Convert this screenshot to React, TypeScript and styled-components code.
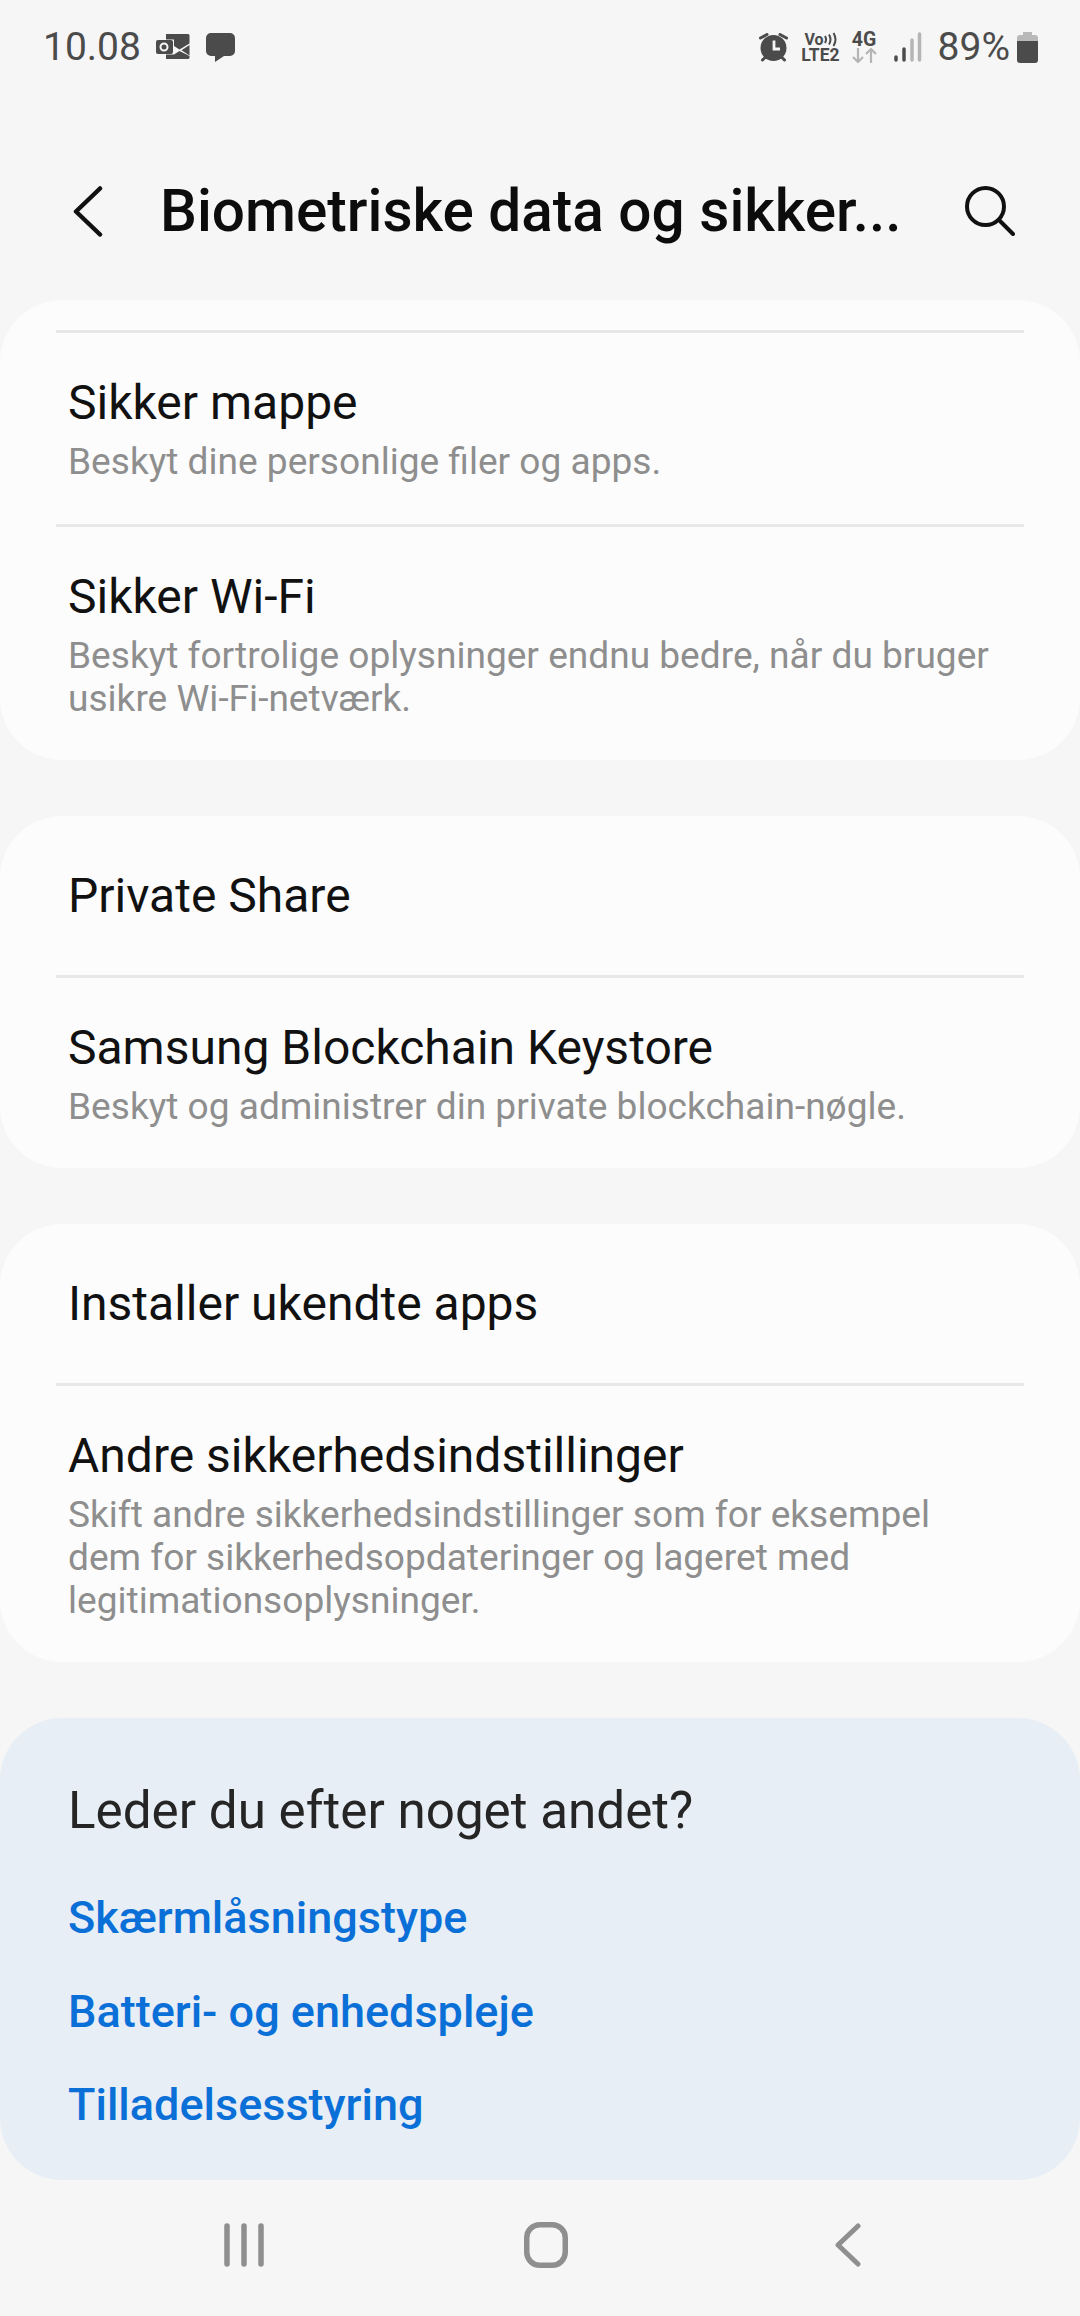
import styled, { createGlobalStyle } from "styled-components";

const GlobalStyle = createGlobalStyle`
  html, body {
    margin: 0;
    padding: 0;
    background: #f6f6f6;
  }
  * {
    box-sizing: border-box;
  }
`;

const Screen = styled.div`
  width: 1080px;
  height: 2316px;
  overflow: hidden;
  display: flex;
  flex-direction: column;
  background: #f6f6f6;
  font-family: Roboto, "Noto Sans", sans-serif;
`;

const StatusBar = styled.div`
  height: 90px;
  padding: 4px 42px 0 43px;
  display: flex;
  align-items: center;
  justify-content: space-between;
  color: #4b4b4b;
`;

const StatusGroup = styled.div`
  display: flex;
  align-items: center;
`;

const Spacer = styled.span<{ $w: number }>`
  width: ${(p) => p.$w}px;
`;

const Clock = styled.span`
  font-size: 39px;
  line-height: 44px;
`;

const Percent = styled.span`
  font-size: 39px;
  line-height: 44px;
`;

const NetBlock = styled.div`
  display: flex;
  flex-direction: column;
  align-items: center;
  font-weight: 700;
`;

const VoLine = styled.div`
  height: 17px;
  display: flex;
  align-items: center;
  font-size: 16px;
  line-height: 17px;
`;

const LteLine = styled.div`
  font-size: 17.5px;
  line-height: 15px;
`;

const FourGLine = styled.div`
  font-size: 19.5px;
  line-height: 17px;
`;

const Header = styled.header`
  height: 210px;
  padding: 32px 0 0 73px;
  display: flex;
  align-items: center;
`;

const Title = styled.h1`
  flex: 1;
  margin: 0 0 0 57px;
  font-size: 58.500px;
  font-weight: 500;
  color: #0c0c0c;
  white-space: nowrap;
`;

const SearchButton = styled.div`
  margin-right: 65px;
  display: flex;
`;

const Card = styled.section`
  background: #fcfcfc;
  border-radius: 62px;
  margin-bottom: 56px;
`;

const TopRule = styled.div`
  height: 33px;
  margin: 0 56px;
  border-bottom: 3px solid #e8e8e8;
`;

const Row = styled.div<{ $hasSub?: boolean }>`
  margin: 0 56px;
  padding: ${(p) => (p.$hasSub ? "41px 12px 40.5px" : "51px 12px 49.5px")};
  & + & {
    border-top: 3px solid #e8e8e8;
  }
`;

const RowTitle = styled.div`
  font-size: 48px;
  line-height: 58px;
  color: #111;
`;

const RowSub = styled.div`
  margin-top: 8px;
  font-size: 37.1px;
  line-height: 43px;
  color: #8e8e8e;
  white-space: pre-line;
`;

const HelpCard = styled.section`
  background: #e7eef5;
  border-radius: 62px;
  height: 462px;
  padding: 62px 68px 0;
`;

const HelpTitle = styled.div`
  font-size: 51.2px;
  line-height: 62px;
  color: #252525;
  margin-bottom: 29px;
`;

const HelpLink = styled.a`
  display: block;
  font-size: 45px;
  font-weight: 500;
  line-height: 93.500px;
  color: #0a70d8;
`;

const NavBar = styled.nav`
  flex: 1;
  display: grid;
  grid-template-columns: repeat(3, 302px);
  padding: 0 0 6px 93px;
  align-items: center;
  justify-items: center;
`;

const AlarmIcon = () => (
  <svg width="29" height="29" viewBox="0 0 29 29">
    <circle cx="14.500" cy="15" r="13" fill="#4b4b4b" />
    <path d="M1.500 5L8 1.500M21 1.500L27.500 5M3.500 27l2.500-2.500M25.500 27L23 24.500" stroke="#4b4b4b" strokeWidth="3" strokeLinecap="round" />
    <path d="M15 7.500v8.500h6" fill="none" stroke="#f6f6f6" strokeWidth="2.800" />
  </svg>
);

const OutlookIcon = () => (
  <svg width="34" height="26" viewBox="0 0 34 26" fill="#4b4b4b">
    <path d="M10 0h22a1.500 1.500 0 0 1 1.500 1.500V9.500L23.500 15.500L18 12V5.500H10z" />
    <path d="M10 25h22a1.500 1.500 0 0 0 1.500-1.500V22L23.500 17L18 20.500H10z" />
    <path d="M25.500 16.200l8-5.200v10.400z" />
    <rect x="0" y="6" width="17" height="14" rx="2" />
    <circle cx="8" cy="13" r="3.500" fill="none" stroke="#f6f6f6" strokeWidth="2" />
  </svg>
);

const ChatIcon = () => (
  <svg width="29" height="29" viewBox="0 0 29 29">
    <path d="M5 0h19a5 5 0 0 1 5 5v13a5 5 0 0 1-5 5H18l-9 6v-6H5a5 5 0 0 1-5-5V5a5 5 0 0 1 5-5z" fill="#4b4b4b" />
  </svg>
);

const VoWaves = () => (
  <svg width="13" height="15" viewBox="0 0 13 15" fill="none" stroke="#4b4b4b" strokeWidth="2">
    <path d="M1 4q2 3.500 0 7M5 2.500q3 5 0 10M9.500 1q4 6.500 0 13" />
  </svg>
);

const NetArrows = () => (
  <svg width="25" height="15" viewBox="0 0 25 15" fill="none" stroke="#b5b5b5" strokeWidth="2.200">
    <path d="M6 0v14M1 9l5 5 5-5M19 15V1M14 6l5-5 5 5" />
  </svg>
);

const SignalIcon = () => (
  <svg width="28" height="30" viewBox="0 0 28 30" strokeLinecap="round" strokeWidth="3.500">
    <path d="M2 25v3" stroke="#4b4b4b" />
    <path d="M10 17v11" stroke="#4b4b4b" />
    <path d="M18 8v20" stroke="#b5b5b5" />
    <path d="M25.500 2v26" stroke="#b5b5b5" />
  </svg>
);

const BatteryIcon = () => (
  <svg width="21" height="31" viewBox="0 0 21 31">
    <path d="M6 0h9v3h3a3 3 0 0 1 3 3v4H0V6a3 3 0 0 1 3-3h3z" fill="#b9b9b9" />
    <path d="M0 9h21v19a3 3 0 0 1-3 3H3a3 3 0 0 1-3-3z" fill="#4b4b4b" />
  </svg>
);

const BackIcon = () => (
  <svg width="30" height="51" viewBox="0 0 30 51" fill="none" stroke="#111" strokeWidth="4.500" strokeLinecap="round" strokeLinejoin="round">
    <path d="M27 2.500L3 25.500l24 23" />
  </svg>
);

const SearchIcon = () => (
  <svg width="50" height="50" viewBox="0 0 50 50" fill="none" stroke="#111" strokeWidth="4" strokeLinecap="round">
    <circle cx="20.500" cy="20.500" r="18.500" />
    <path d="M34 34l14 14" />
  </svg>
);

const NavRecents = () => (
  <svg width="40" height="44" viewBox="0 0 40 44" fill="none" stroke="#8f8f8f" strokeWidth="5.500" strokeLinecap="round">
    <path d="M3 3v38M20 3v38M37 3v38" />
  </svg>
);

const NavHome = () => (
  <svg width="44" height="46" viewBox="0 0 44 46" fill="none" stroke="#8f8f8f" strokeWidth="5.500">
    <rect x="2.750" y="2.750" width="38.500" height="40.500" rx="13" />
  </svg>
);

const NavBack = () => (
  <svg width="26" height="44" viewBox="0 0 26 44" fill="none" stroke="#8f8f8f" strokeWidth="5" strokeLinecap="round" strokeLinejoin="round">
    <path d="M23 3L3 22l20 19" />
  </svg>
);

function App() {
  return (
    <Screen>
      <GlobalStyle />
      <StatusBar>
        <StatusGroup>
          <Clock>10.08</Clock>
          <Spacer $w={15} />
          <OutlookIcon />
          <Spacer $w={16} />
          <ChatIcon />
        </StatusGroup>
        <StatusGroup>
          <AlarmIcon />
          <Spacer $w={13} />
          <NetBlock>
            <VoLine>
              Vo
              <VoWaves />
            </VoLine>
            <LteLine>LTE2</LteLine>
          </NetBlock>
          <Spacer $w={12} />
          <NetBlock>
            <FourGLine>4G</FourGLine>
            <NetArrows />
          </NetBlock>
          <Spacer $w={17} />
          <SignalIcon />
          <Spacer $w={16} />
          <Percent>89%</Percent>
          <Spacer $w={7} />
          <BatteryIcon />
        </StatusGroup>
      </StatusBar>
      <Header>
        <BackIcon />
        <Title>Biometriske data og sikker...</Title>
        <SearchButton>
          <SearchIcon />
        </SearchButton>
      </Header>
      <Card>
        <TopRule />
        <Row $hasSub>
          <RowTitle>Sikker mappe</RowTitle>
          <RowSub>Beskyt dine personlige filer og apps.</RowSub>
        </Row>
        <Row $hasSub>
          <RowTitle>Sikker Wi-Fi</RowTitle>
          <RowSub>{"Beskyt fortrolige oplysninger endnu bedre, når du bruger\nusikre Wi-Fi-netværk."}</RowSub>
        </Row>
      </Card>
      <Card>
        <Row>
          <RowTitle>Private Share</RowTitle>
        </Row>
        <Row $hasSub>
          <RowTitle>Samsung Blockchain Keystore</RowTitle>
          <RowSub>Beskyt og administrer din private blockchain-nøgle.</RowSub>
        </Row>
      </Card>
      <Card>
        <Row>
          <RowTitle>Installer ukendte apps</RowTitle>
        </Row>
        <Row $hasSub>
          <RowTitle>Andre sikkerhedsindstillinger</RowTitle>
          <RowSub>{"Skift andre sikkerhedsindstillinger som for eksempel\ndem for sikkerhedsopdateringer og lageret med\nlegitimationsoplysninger."}</RowSub>
        </Row>
      </Card>
      <HelpCard>
        <HelpTitle>Leder du efter noget andet?</HelpTitle>
        <HelpLink>Skærmlåsningstype</HelpLink>
        <HelpLink>Batteri- og enhedspleje</HelpLink>
        <HelpLink>Tilladelsesstyring</HelpLink>
      </HelpCard>
      <NavBar>
        <NavRecents />
        <NavHome />
        <NavBack />
      </NavBar>
    </Screen>
  );
}

export default App;
